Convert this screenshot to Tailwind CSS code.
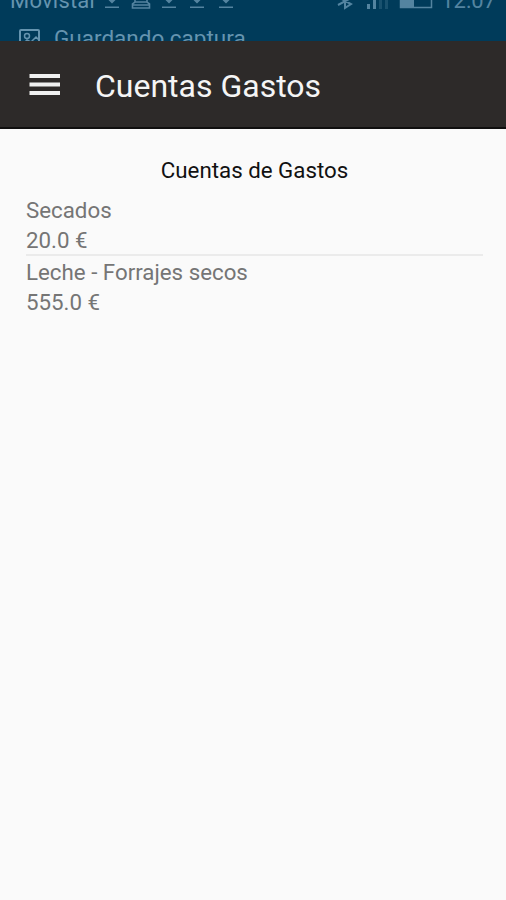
<!DOCTYPE html>
<html lang="es">
<head>
    <meta charset="UTF-8" />
    <title>Cuentas Gastos</title>
    <script src="https://cdn.jsdelivr.net/npm/@tailwindcss/browser@4"></script>
</head>
<body class="bg-[#fafafa] h-screen overflow-hidden font-['Roboto',sans-serif]">
    <!-- Status bar -->
    <div class="h-[41px] bg-[#003b5a] text-[#6594af] overflow-hidden">
        <div class="-mt-[12px] h-[26px] pl-[10px] pr-[10px] flex items-center justify-between text-[22px] leading-[26px]">
            <div class="flex items-center">
                <span class="w-[95px] whitespace-nowrap tracking-[0.2px]">Movistar</span>
                <svg class="w-[130px] h-[26px] text-[#5484a0]" viewBox="0 0 130 26" fill="none" stroke="currentColor" stroke-width="1.6">
                    <path d="M0 19.300h14M57 19.300h14M85 19.300h14M114 19.300h14"/>
                    <path d="M30 8v6l-2.500 2v4h17v-4l-2.500-2V8M30 14h12M27.500 17h17"/>
                    <path fill="currentColor" stroke="none" d="M3.500 12h7L7 15.500zM60.500 12h7L64 15.500zM88.500 12h7L92 15.500zM117.500 12h7l-3.500 3.500z"/>
                </svg>
            </div>
            <div class="flex items-center text-[#5484a0]">
                <svg class="w-[106px] h-[26px] mr-px" viewBox="0 0 106 26" fill="none" stroke="currentColor">
                    <path stroke-width="2" d="M4 17l13-7-6-5v15l6-4L4 9"/>
                    <path stroke-width="3" d="M34.500 16v5M40.500 10v11"/>
                    <path stroke-width="3" opacity=".3" d="M46.500 7v14M52.500 3v18"/>
                    <path stroke-width="1.500" d="M66.500 7h31v12.500h-31z"/>
                    <path fill="currentColor" stroke="none" d="M66 7h14v12H66z"/>
                </svg>
                <span>12:07</span>
            </div>
        </div>
        <div class="mt-[11px] pl-[19px] flex text-[22.500px] leading-[26px]">
            <svg class="w-[35px] h-[26px] shrink-0" viewBox="0 0 35 26" fill="none" stroke="currentColor" stroke-width="2">
                <rect x="1" y="5" width="19" height="17" rx="1"/>
                <circle cx="8" cy="11" r="2.500" stroke-width="1.500"/>
                <path stroke-width="1.500" d="M4 19l4-4 4 2 5-5 3 3"/>
            </svg>
            <span>Guardando captura</span>
        </div>
    </div>

    <!-- App bar -->
    <header class="h-[88px] bg-[#2d2a29] border-b-2 border-[#100f0f] flex items-center pl-[29px]">
        <svg class="w-[31px] h-[24px] mr-[35px]" viewBox="0 0 31 24" fill="#f0f0f0">
            <path d="M.5 2h30.500v4H.5zM.5 10.500h30.500v4H.5zM.5 19h30.500v4H.5z"/>
        </svg>
        <h1 class="text-[32px] leading-10 text-[#f5f5f5] mt-[3px]">Cuentas Gastos</h1>
    </header>

    <!-- Accounts list -->
    <main class="pt-[26px] pl-[26px] pr-[23px] text-[22.300px] leading-[30.500px] text-[#757575]">
        <h2 class="text-center text-[#111] mb-[9px]">Cuentas de Gastos</h2>
        <div class="h-[61px] border-b-2 border-[#ebebeb]">
            <p>Secados</p>
            <p>20.0 €</p>
        </div>
        <div class="pt-px">
            <p>Leche - Forrajes secos</p>
            <p>555.0 €</p>
        </div>
    </main>
</body>
</html>
